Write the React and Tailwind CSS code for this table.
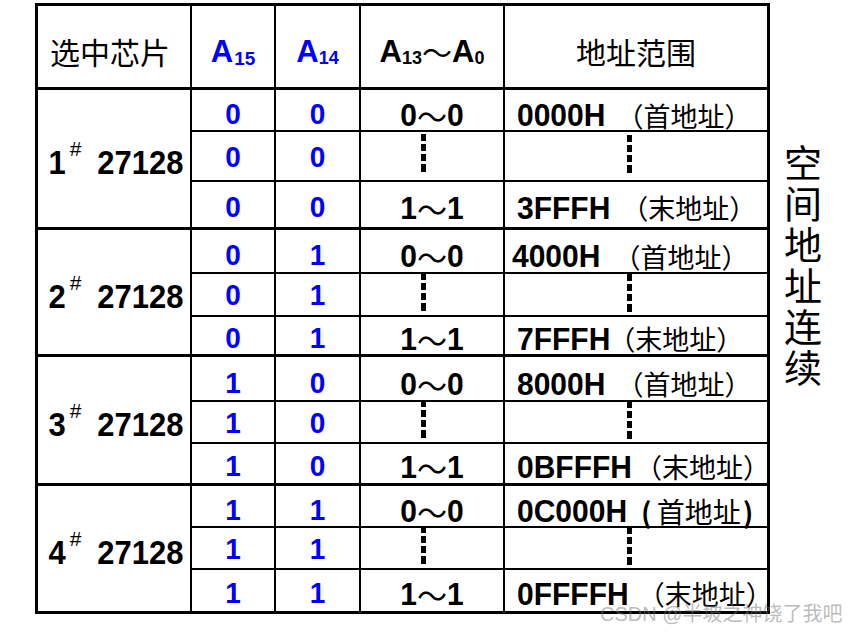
const latin = "font-['Liberation_Sans','Noto_Sans_CJK_SC',sans-serif]";
const cjk = "font-['Noto_Sans_CJK_SC',sans-serif]";

const groups = [
  {
    chip: "1",
    a15: "0",
    a14: "0",
    addrs: [
      { num: "0000H", note: "（首地址）", ml: 11 },
      null,
      { num: "3FFFH", note: "（末地址）", ml: 11 },
    ],
  },
  {
    chip: "2",
    a15: "0",
    a14: "1",
    addrs: [
      { num: "4000H", note: "（首地址）", ml: 13, pl: 7 },
      null,
      { num: "7FFFH", note: "（末地址）", ml: -2 },
    ],
  },
  {
    chip: "3",
    a15: "1",
    a14: "0",
    addrs: [
      { num: "8000H", note: "（首地址）", ml: 11 },
      null,
      { num: "0BFFFH", note: "（末地址）", ml: 3 },
    ],
  },
  {
    chip: "4",
    a15: "1",
    a14: "1",
    addrs: [
      { num: "0C000H", note: "half", ml: 14 },
      null,
      { num: "0FFFFH", note: "（末地址）", ml: 9 },
    ],
  },
];

const rowPad = ["pt-[10px]", "pt-[3px]", "pt-[6px]"];

function Dots({ shift }) {
  return (
    <div className={`flex flex-col gap-[3px] ${shift}`}>
      <span className="block h-[7px] w-[5px] bg-black" />
      <span className="block h-[7px] w-[5px] bg-black" />
      <span className="block h-[7px] w-[5px] bg-black" />
      <span className="block h-[8px] w-[5px] bg-black" />
    </div>
  );
}

function Blue({ children, pad, bottom }) {
  return (
    <div
      className={`flex items-center justify-center border-r-2 border-black ${bottom} ${pad} ${latin} text-[28px] font-bold leading-none text-[#0000ff]`}
    >
      <span className="scale-y-[1.05]">{children}</span>
    </div>
  );
}

export default function App() {
  const cells = [];

  groups.forEach((g, gi) => {
    const last = gi === groups.length - 1;
    cells.push(
      <div
        key={`chip-${gi}`}
        className={`row-span-3 flex items-center justify-center border-r-2 border-black ${
          last ? "" : "border-b-[3px]"
        } pt-[8px] pl-[4px] ${latin} text-[31px] font-bold leading-none text-black`}
      >
        <span className="scale-y-[1.1]">{g.chip}</span>
        <span className="relative -top-[14px] ml-[4px] text-[21px] font-normal">#</span>
        <span className="ml-[16px] scale-y-[1.1]">27128</span>
      </div>
    );

    [0, 1, 2].forEach((ri) => {
      let bottom = "border-b-2";
      if (ri === 2) bottom = last ? "" : "border-b-[3px]";
      const pad = rowPad[ri];
      const a = g.addrs[ri];

      cells.push(
        <Blue key={`a15-${gi}-${ri}`} pad={pad} bottom={bottom}>
          {g.a15}
        </Blue>
      );
      cells.push(
        <Blue key={`a14-${gi}-${ri}`} pad={pad} bottom={bottom}>
          {g.a14}
        </Blue>
      );

      cells.push(
        <div
          key={`mid-${gi}-${ri}`}
          className={`flex items-center justify-center border-r-2 border-black ${bottom} ${
            ri === 1 ? "" : pad
          } ${latin} text-[30px] font-bold leading-none text-black`}
        >
          {ri === 1 ? (
            <Dots shift="mr-[18px] -mt-[6px]" />
          ) : (
            <span className="flex scale-y-[1.07] items-center">
              <span>{ri === 0 ? "0" : "1"}</span>
              <span className={`${cjk} font-normal`}>～</span>
              <span>{ri === 0 ? "0" : "1"}</span>
            </span>
          )}
        </div>
      );

      cells.push(
        <div
          key={`addr-${gi}-${ri}`}
          className={`flex items-center border-black ${bottom} ${ri === 1 ? "justify-center" : pad}`}
        >
          {ri === 1 ? (
            <Dots shift="mr-[14px] -mt-[4px]" />
          ) : (
            <>
              <span
                className={`${latin} scale-y-[1.07] text-[30px] font-bold leading-none text-black`}
                style={{ marginLeft: a.pl ?? 12 }}
              >
                {a.num}
              </span>
              {a.note === "half" ? (
                <span
                  className={`${cjk} flex items-center text-[28px] leading-none text-black`}
                  style={{ marginLeft: a.ml }}
                >
                  <span className="font-bold">(</span>
                  <span className="ml-[5px]">首地址</span>
                  <span className="ml-[2px] font-bold">)</span>
                </span>
              ) : (
                <span
                  className={`${cjk} text-[27px] leading-none text-black`}
                  style={{ marginLeft: a.ml }}
                >
                  {a.note}
                </span>
              )}
            </>
          )}
        </div>
      );
    });
  });

  return (
    <div className="relative h-[632px] w-[848px] overflow-hidden bg-white">
      <div className="flex items-start pl-[35px] pt-[3px]">
        <div className="grid w-[735px] grid-cols-[154px_84px_85px_144px_1fr] grid-rows-[84px_42px_50px_48px_44px_43px_40px_45px_42px_42px_42px_42px_41px] border-[3px] border-black">
          <div
            className={`flex items-center justify-center border-r-2 border-b-[3px] border-black pt-[9px] pr-[8px] ${cjk} text-[30px] leading-none text-black`}
          >
            选中芯片
          </div>
          <div
            className={`flex items-center justify-center border-r-2 border-b-[3px] border-black pt-[9px] ${latin} font-bold leading-none text-[#0000ff]`}
          >
            <span className="text-[31px]">A</span>
            <span className="relative top-[7px] ml-[1px] text-[19px]">15</span>
          </div>
          <div
            className={`flex items-center justify-center border-r-2 border-b-[3px] border-black pt-[9px] ${latin} font-bold leading-none text-[#0000ff]`}
          >
            <span className="text-[31px]">A</span>
            <span className="relative top-[7px] text-[18px]">14</span>
          </div>
          <div
            className={`flex items-center justify-center border-r-2 border-b-[3px] border-black pt-[9px] ${latin} font-bold leading-none text-black`}
          >
            <span className="text-[31px]">A</span>
            <span className="relative top-[7px] text-[18px]">13</span>
            <span className={`${cjk} text-[30px] font-normal`}>～</span>
            <span className="text-[31px]">A</span>
            <span className="relative top-[7px] text-[18px]">0</span>
          </div>
          <div
            className={`flex items-center justify-center border-b-[3px] border-black pt-[9px] ${cjk} text-[30px] leading-none text-black`}
          >
            地址范围
          </div>
          {cells}
        </div>

        <div
          className={`ml-[14px] mt-[139px] flex flex-col ${cjk} text-[38px] leading-none text-black`}
        >
          <span className="h-[41px]">空</span>
          <span className="h-[41px]">间</span>
          <span className="h-[41px]">地</span>
          <span className="h-[41px]">址</span>
          <span className="h-[41px]">连</span>
          <span className="h-[41px]">续</span>
        </div>
      </div>

      <div
        className={`absolute left-[600px] top-[604px] ${latin} text-[20px] leading-none text-[rgba(120,120,120,0.5)]`}
      >
        CSDN @半坡之神饶了我吧
      </div>
    </div>
  );
}
